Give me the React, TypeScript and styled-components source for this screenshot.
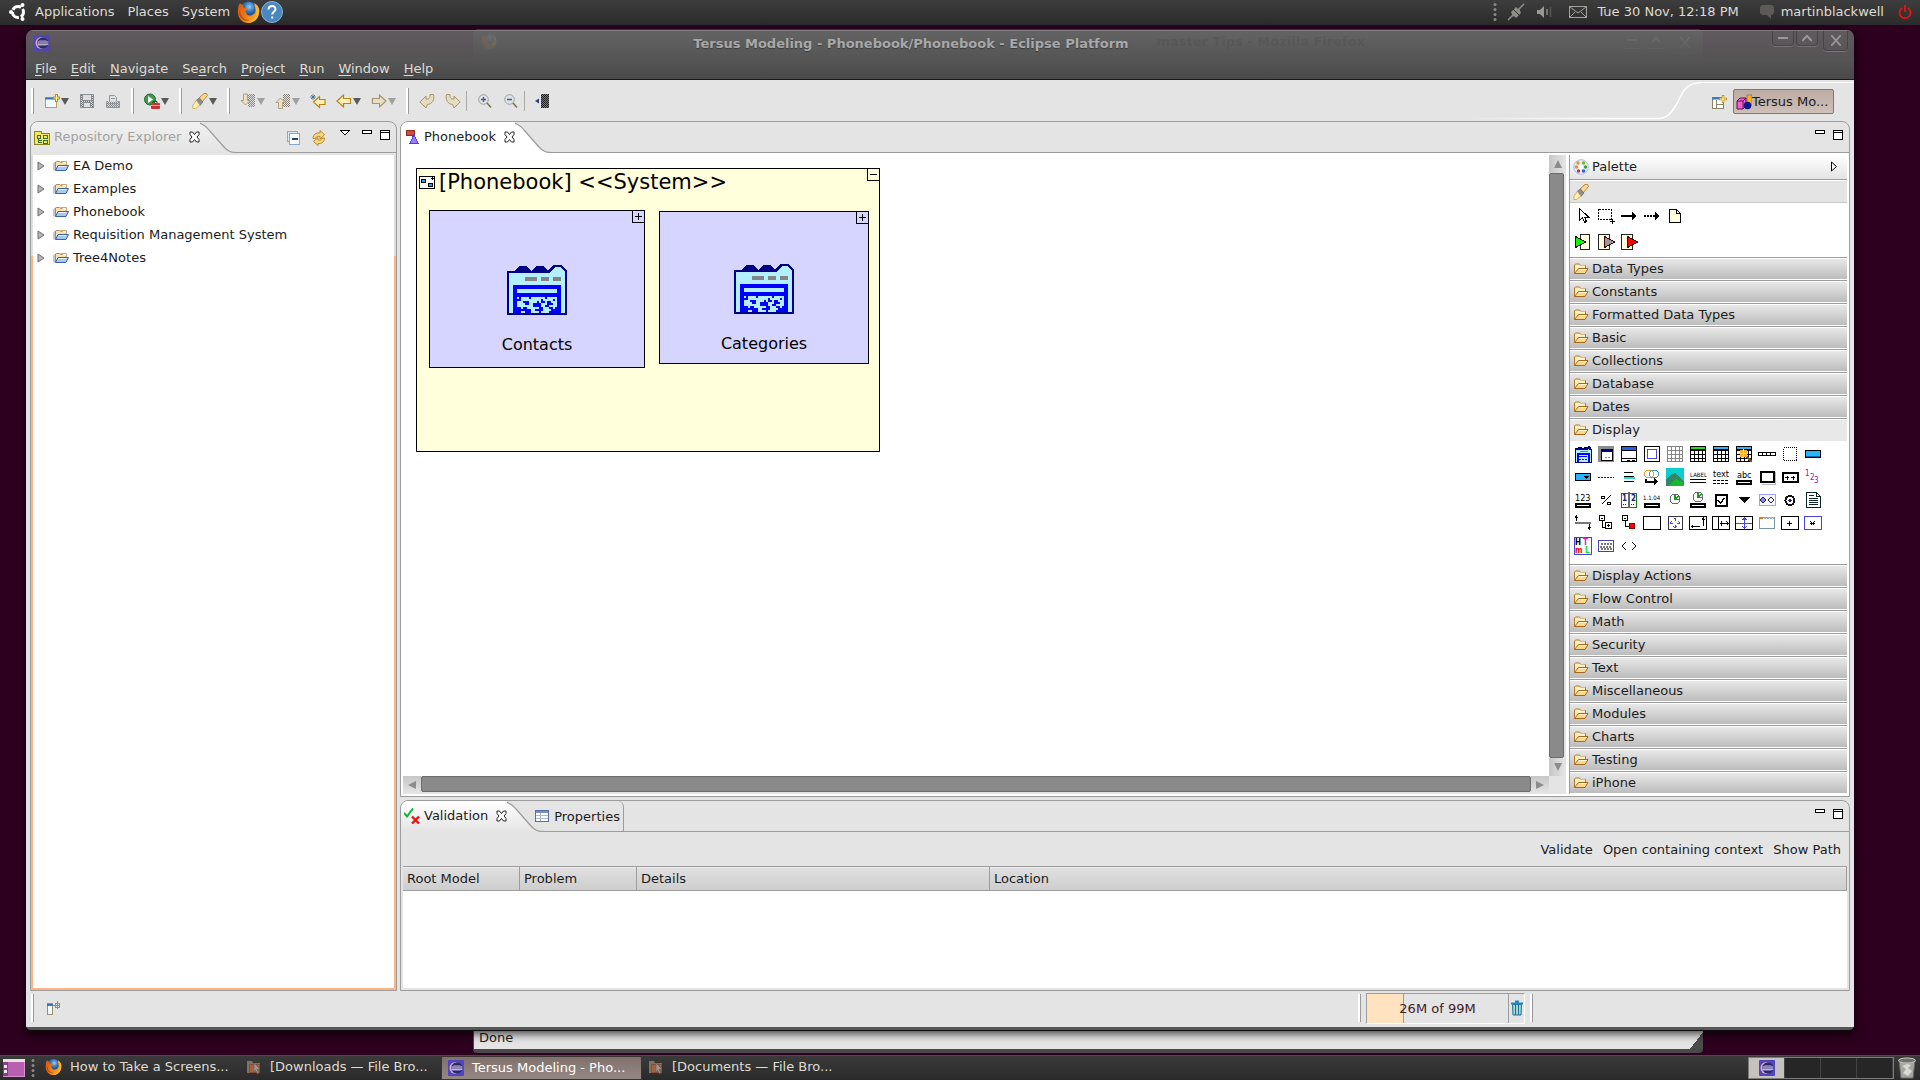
import React from "react";
import styled, { createGlobalStyle, css } from "styled-components";

const GlobalStyle = createGlobalStyle`
  *, *::before, *::after { box-sizing: border-box; }
  html, body { margin: 0; height: 100%; }
  body {
    overflow: hidden;
    background: #2c001e;
    font-family: "DejaVu Sans", Verdana, sans-serif;
    font-size: 13px;
    line-height: 17px;
    color: #1c1c1c;
  }
  button { font: inherit; color: inherit; background: none; border: 0; padding: 0; margin: 0; }
  svg { display: block; flex: none; }
`;

const LINE = "#9c9c9c";
const FACE = "#e4e4e4";

/* ---------- shared icon frame ---------- */

type PixProps = { w?: number; h?: number; smooth?: boolean; children: React.ReactNode };
const Pix = ({ w = 16, h = 16, smooth, children }: PixProps) => (
  <svg width={w} height={h} viewBox={`0 0 ${w} ${h}`} shapeRendering={smooth ? "auto" : "crispEdges"} fill="none" aria-hidden="true">
    {children}
  </svg>
);

const Firefox = ({ s = 16 }: { s?: number }) => (
  <svg width={s} height={s} viewBox="0 0 24 24" aria-hidden="true">
    <defs>
      <radialGradient id="globe" cx=".55" cy=".3" r=".6"><stop offset="0" stopColor="#8fd0f4" /><stop offset=".5" stopColor="#2b6cb4" /><stop offset="1" stopColor="#0d2c66" /></radialGradient>
      <linearGradient id="fox" x1="0" y1="0" x2="1" y2="1"><stop offset="0" stopColor="#d4540c" /><stop offset=".5" stopColor="#ee7a16" /><stop offset="1" stopColor="#f9c53a" /></linearGradient>
    </defs>
    <circle cx="12" cy="11" r="9.5" fill="url(#globe)" />
    <path d="M3 3c1 1 2 2 4 2-1 1-1 2 0 3l4 1c0 1-1 2-2 2 0 4 3 6 6 5 3-1 5-4 4-7 0-2-1-3-2-4 3 0 6 4 6 8 0 6-5 11-11 11S1 19 1 13c0-4 0-7 2-10z" fill="url(#fox)" />
    <path d="M18 3c4 2 6 6 5 10-1 6-5 10-11 11 5-2 8-6 8-11 0-4-1-7-2-10z" fill="#f7b52c" />
    <path d="M3 10c0 6 4 11 10 11-4 2-10-1-11-7z" fill="#b53a0a" opacity=".7" />
  </svg>
);

const EclipseIcon = ({ s = 16 }: { s?: number }) => (
  <svg width={s} height={s} viewBox="0 0 16 16" aria-hidden="true">
    <rect width="16" height="16" rx="1" fill="#5044c0" />
    <circle cx="7.500" cy="8" r="6" fill="#e2b4bc" />
    <circle cx="8.800" cy="8" r="5.700" fill="#2f2768" />
    <path d="M5.200 5.500h7.200M4 10.500h8.500" stroke="#6f66b8" strokeWidth="1.200" />
    <path d="M3.500 7h10.800M3.500 9.200h10.800" stroke="#e4e6fa" strokeWidth="1.200" />
  </svg>
);

const FilesIcon = () => (
  <Pix smooth>
    <path d="M1 2h5l1 2h7v10H1z" fill="#7c736c" /><path d="M3 5h11v9H3z" fill="#8b4a32" /><path d="M4 6h9v7H4z" fill="#a5623f" />
    <path d="M8 4l6 6-3 .5 2 3.500-1.500.8-2-3.500-1.500 2z" fill="#9c9894" stroke="#5f5a56" strokeWidth=".6" />
  </Pix>
);

const Handle = styled.span<{ $h?: number }>`
  width: 3px;
  height: ${(p) => p.$h ?? 26}px;
  margin: 0 5px;
  background: linear-gradient(90deg, #fff 0 2px, #999 2px);
  flex: none;
`;

const Dots = () => (
  <Pix w={4} h={18} smooth>
    {[2, 7, 12, 17].map((y) => <circle key={y} cx="2" cy={y - 0.5} r="1.500" fill="#8b8984" />)}
  </Pix>
);

/* ---------- desktop panels ---------- */

const Desktop = styled.div`
  position: relative;
  height: 100vh;
  overflow: hidden;
  display: flex;
  flex-direction: column;
  justify-content: space-between;
  background: #2c001e;
`;
const panel = css`
  display: flex;
  align-items: center;
  height: 25px;
  color: #dfdbd2;
  flex: none;
`;
const TopPanel = styled.header`
  ${panel}
  padding: 0 8px 2px 9px;
  background: linear-gradient(#3d3d3d, #2b2b2b);
`;
const PanelMenu = styled.button`
  padding: 0 7px 0 6px;
  height: 23px;
`;
const PanelIcons = styled.div`
  display: flex;
  align-items: center;
`;
const Tray = styled.div`
  margin-left: auto;
  display: flex;
  align-items: center;
  gap: 10px;
`;
const User = styled.button`
  display: flex;
  align-items: center;
  gap: 6px;
  margin: 0 4px 0 10px;
`;
const LogoSlot = styled.div`margin-right: 3px;`;

const BottomPanel = styled.footer`
  ${panel}
  border-top: 1px solid #4e474c;
  background: linear-gradient(#3a3a3a, #2a2a2a);
  padding: 0 3px 1px;
`;
const Task = styled.button<{ $active?: boolean }>`
  display: flex;
  align-items: center;
  gap: 8px;
  width: 201px;
  height: 24px;
  padding: 0 6px 2px;
  text-align: left;
  white-space: nowrap;
  ${(p) => p.$active && css`
    color: #fff;
    background: linear-gradient(#80716c, #948783);
    border: 1px solid #3a3431;
    padding: 0 6px;
  `}
`;
const TaskList = styled.nav`
  display: flex;
  margin-left: 4px;
`;
const DotSlot = styled.div`margin-left: 6px;`;
const Workspaces = styled.div`
  margin-left: auto;
  display: grid;
  grid-template-columns: repeat(4, 36px);
  height: 22px;
  border: 1px solid #7b7b7b;
`;
const Workspace = styled.button<{ $on?: boolean }>`
  display: grid;
  place-items: center;
  background: ${(p) => (p.$on ? "#c4c1bf" : "#262626")};
  border-right: 1px solid #444;
`;
const TrashSlot = styled.div`margin-left: 3px;`;

/* ---------- browser window behind ---------- */

const Browser = styled.section`
  position: absolute;
  top: 29px;
  right: 217px;
  bottom: 27px;
  left: 473px;
  display: flex;
  flex-direction: column;
  background: #4c474b;
  border-radius: 6px 6px 4px 4px;
`;
const BrowserTitle = styled.div`
  display: flex;
  align-items: flex-start;
  height: 30px;
  padding: 4px 6px 0 8px;
  background: #404040;
  border-radius: 6px 6px 0 0;
`;
const BrowserName = styled.div`
  flex: 1;
  padding-right: 256px;
  text-align: right;
  font-weight: bold;
  color: #000;
`;
const BrowserPage = styled.div`
  flex: 1;
  margin-left: 1px;
  background: #fff;
`;
const BrowserStatus = styled.div`
  display: flex;
  align-items: center;
  justify-content: space-between;
  height: 24px;
  margin-bottom: 4px;
  padding-left: 5px;
  background: ${FACE};
  margin-left: 1px;
`;
const Grip = styled.span`
  align-self: flex-end;
  width: 13px;
  height: 17px;
  background: linear-gradient(127deg, ${FACE} 50%, #4c4a4b 50%);
`;

/* ---------- main window ---------- */

const Window = styled.main`
  position: absolute;
  top: 30px;
  right: 66px;
  bottom: 49px;
  left: 26px;
  display: flex;
  flex-direction: column;
  border-radius: 7px 7px 5px 5px;
  overflow: hidden;
  box-shadow: 0 3px 9px rgba(0, 0, 0, 0.7);
  border-bottom: 1px solid #0c0c0c;
`;
const TitleBar = styled.div`
  display: flex;
  align-items: center;
  height: 28px;
  flex: none;
  padding: 0 6px 3px 8px;
  border-top: 1px solid #7d7d7d;
  background: linear-gradient(rgba(105, 105, 105, 0.86), rgba(86, 86, 86, 0.97));
`;
const Title = styled.h1`
  flex: 1;
  margin: 0;
  text-align: center;
  font-size: 13px;
  line-height: 17px;
  color: #a8a8a8;
  text-shadow: 0 1px 1px #3c3c3c;
`;
const Fade = styled.div`opacity: 0.9;`;
const WinButtons = styled.div`
  display: flex;
  align-self: flex-start;
  gap: 2px;
`;
const WinButton = styled.button<{ $close?: boolean }>`
  display: grid;
  place-items: center;
  width: ${(p) => (p.$close ? 25 : 22)}px;
  height: ${(p) => (p.$close ? 20 : 15)}px;
  margin-left: ${(p) => (p.$close ? 3 : 0)}px;
  border: 1px solid #47434a;
  border-top: 0;
  border-radius: 0 0 4px 4px;
  box-shadow: 0 1px 0 #777;
`;

const MenuBar = styled.nav`
  display: flex;
  height: 22px;
  flex: none;
  padding: 0 2px;
  background: linear-gradient(#565656, #494949);
  border-bottom: 1px solid #191919;
  color: #dfdbd2;
`;
const MenuItem = styled.button`
  padding: 0 7px 1px;
  & u { text-underline-offset: 2px; }
`;

const Toolbar = styled.div`
  display: flex;
  height: 41px;
  flex: none;
  background: ${FACE};
`;
const Tools = styled.div`
  display: flex;
  align-items: center;
`;
const Tool = styled.button`
  display: flex;
  align-items: center;
  gap: 1px;
  padding: 0 5px;
  height: 26px;
`;
const Sep = styled.span`
  width: 1px;
  height: 20px;
  margin-right: 5px;
  background: #aaa;
`;
const Perspectives = styled.div`
  display: flex;
  align-items: center;
  margin-left: auto;
`;
const PerspectiveTail = styled.div`
  display: flex;
  align-items: center;
  align-self: stretch;
  gap: 1px;
  padding: 2px 20px 0 4px;
  position: relative;
  &::before {
    content: "";
    position: absolute;
    left: 0;
    right: 0;
    top: 2px;
    border-top: 1px solid #fff;
  }
`;
const Selected = styled.button`
  display: flex;
  align-items: center;
  width: 101px;
  height: 25px;
  padding: 0 2px;
  white-space: nowrap;
  border: 1px solid #83766f;
  border-radius: 2px;
  background: linear-gradient(#bdaca3, #cdc0b8);
`;

const Workbench = styled.div`
  flex: 1;
  min-height: 0;
  display: grid;
  grid-template-columns: 367px minmax(0, 1fr);
  gap: 3px;
  padding: 0 4px;
  background: ${FACE};
`;
const Stack = styled.div`
  min-height: 0;
  display: grid;
  grid-template-rows: minmax(0, 1fr) 191px;
  gap: 3px;
`;
const Pane = styled.section`
  display: flex;
  flex-direction: column;
  min-width: 0;
  min-height: 0;
  border: 1px solid ${LINE};
  border-radius: 8px 8px 0 0;
  overflow: hidden;
  background: ${FACE};
`;
const TabStrip = styled.div`
  display: flex;
  height: 31px;
  flex: none;
  border-bottom: 1px solid ${LINE};
`;
const Tab = styled.div<{ $tone: "white" | "fade" | "dim" }>`
  position: relative;
  z-index: 1;
  display: flex;
  align-items: center;
  height: 31px;
  padding: 0 0 2px 3px;
  color: ${(p) => (p.$tone === "dim" ? "#a3a29f" : "#1c1c1c")};
  background: ${(p) => (p.$tone === "white" ? "#fff" : `linear-gradient(${p.$tone === "dim" ? "#f0f0f0" : "#fff"}, ${FACE})`)};
`;
const TabName = styled.span`
  margin: 0 8px 0 4px;
  white-space: nowrap;
`;
const IdleTab = styled.button`
  display: flex;
  align-items: center;
  gap: 5px;
  height: 30px;
  margin-left: -10px;
  padding-right: 3px;
  border-right: 1px solid ${LINE};
  border-top-right-radius: 6px;
`;
const ViewTools = styled.div`
  display: flex;
  align-items: flex-start;
  margin: 8px 6px 0 auto;
  gap: 8px;
`;
const CurveBox = styled.div`margin-left: -7px;`;

const Curve = ({ top, bottom }: { top: string; bottom: string }) => (
  <svg width={45} height={31} viewBox="0 0 45 31" aria-hidden="true">
    <defs><linearGradient id={`c${top.slice(1)}`} x1="0" y1="0" x2="0" y2="1"><stop offset="0" stopColor={top} /><stop offset="1" stopColor={bottom} /></linearGradient></defs>
    <rect width="45" height="31" fill={FACE} />
    <path d="M0 0C8 .5 12 3 16 8L31 26C35 29.500 38 30.500 45 30.500L45 31H0z" fill={`url(#c${top.slice(1)})`} />
    <path d="M0 -.5C8 .5 12 3 16 8L31 25C35 29.500 38 30.500 45 30.500" fill="none" stroke={LINE} strokeWidth="1.200" />
  </svg>
);

const CloseX = () => (
  <Pix w={11} h={12} smooth>
    <path d="M1 1h2.500l2 2.500L7.500 1H10v2.500L8 6l2 2.500V11H7.500l-2-2.500-2 2.500H1V8.500L3 6 1 3.500z" fill="#fff" stroke="#222" strokeWidth="1" />
  </Pix>
);
const MinMax = () => (
  <>
    <button aria-label="Minimize"><Pix w={10} h={5}><rect x=".5" y=".5" width="9" height="3" fill="#fff" stroke="#000" /></Pix></button>
    <button aria-label="Maximize"><Pix w={10} h={11}><rect x=".5" y=".5" width="9" height="9" fill="#fff" stroke="#000" /><path d="M0 2.500h10" stroke="#000" /></Pix></button>
  </>
);

/* ---------- tree ---------- */

const TreeFrame = styled.div`
  flex: 1;
  display: flex;
  margin-top: 2px;
  padding: 0 2px 2px;
  background: linear-gradient(#dedede 101px, #fdb484 101px);
`;
const Tree = styled.ul`
  flex: 1;
  margin: 0;
  padding: 0;
  list-style: none;
  background: #fff;
`;
const TreeRow = styled.li`
  display: flex;
  align-items: center;
  height: 23px;
  padding: 0 0 2px 4px;
`;
const TreeLabel = styled.span`margin-left: 4px;`;
const Twist = styled.button`margin-right: 8px;`;

const BlueFolder = () => (
  <Pix smooth>
    <path d="M2.500 12V4.500l1-1h3l1 1h5.500v3" fill="#f8e3b0" stroke="#b08848" />
    <path d="M7.500 3.500h6v3" fill="#fff" stroke="#b89050" strokeWidth=".8" />
    <path d="M2.500 12.500l2.500-5h10.500l-2.500 5z" fill="#a7c8f0" stroke="#3c62a8" />
    <path d="M5.500 8.500h8" stroke="#e6f1fd" />
    <path d="M1 12.500V5.500l2-2" stroke="#6a6f8c" strokeWidth=".8" />
  </Pix>
);
const GoldFolder = () => (
  <Pix smooth>
    <path d="M1.500 12.500V4l1-1h4l1 1.500h5v3" fill="#fdf0c0" stroke="#b8762a" />
    <path d="M1.500 12.500l4-5h9.500l-3 5z" fill="#fbd98c" stroke="#a5661e" />
    <path d="M5 5h7M6 8.500h7.500" stroke="#fff7dc" />
  </Pix>
);

/* ---------- editor ---------- */

const EditorBody = styled.div`
  flex: 1;
  min-height: 0;
  display: grid;
  grid-template-columns: minmax(0, 1fr) 281px;
  background: #fff;
  padding: 2px;
`;
const Scroller = styled.div`
  display: grid;
  grid-template-columns: minmax(0, 1fr) 17px;
  grid-template-rows: minmax(0, 1fr) 18px;
  min-height: 0;
`;
const Canvas = styled.div`
  position: relative;
  overflow: hidden;
`;
const VBar = styled.div`
  display: flex;
  flex-direction: column;
  background: ${FACE};
`;
const HBar = styled.div`
  display: flex;
  background: ${FACE};
`;
const Corner = styled.div`background: ${FACE};`;
const ScrollButton = styled.button<{ $v?: boolean }>`
  display: grid;
  place-items: center;
  width: ${(p) => (p.$v ? 17 : 18)}px;
  height: 18px;
  background: linear-gradient(${(p) => (p.$v ? "90deg" : "180deg")}, #c6c6c6, #e6e6e6);
`;
const Thumb = styled.div<{ $v?: boolean }>`
  flex: 1;
  background: #8a8a8a;
  border: 1px solid #6b6b6b;
  border-radius: 2px;
  margin: ${(p) => (p.$v ? "0 2px 0 0" : "0 0 2px 0")};
`;

const Node = styled.div<{ $x: number; $y: number; $w: number; $h: number; $fill: string }>`
  position: absolute;
  left: ${(p) => p.$x}px;
  top: ${(p) => p.$y}px;
  width: ${(p) => p.$w}px;
  height: ${(p) => p.$h}px;
  background: ${(p) => p.$fill};
  border: 1px solid #000;
  color: #000;
`;
const DisplayNode = styled(Node)<{ $pad: number }>`
  display: flex;
  flex-direction: column;
  align-items: center;
  justify-content: flex-end;
  gap: 19px;
  padding-bottom: ${(p) => p.$pad}px;
  font-size: 16px;
  line-height: 22px;
`;
const Expander = styled.button`
  position: absolute;
  top: -1px;
  right: -1px;
  width: 13px;
  height: 13px;
  border: 1px solid #000;
`;
const NodeTitle = styled.div`
  display: flex;
  align-items: center;
  gap: 4px;
  height: 26px;
  padding-left: 2px;
  font-size: 21px;
  line-height: 26px;
  white-space: nowrap;
`;

const CardFile = () => (
  <Pix w={60} h={50}>
    <path d="M2 8h40l6-6h6l4 5v41H2z" fill="#b2f0ff" />
    <path d="M0 6h8v2H2v40h56V7l-4-5h-6l-6 6H8V6l4-5h8l4 5 5-5h7l5 5 5-6h9l5 6v44H0z" fill="#000084" fillRule="evenodd" />
    <path d="M8 6l4-5h8l4 6 5-6h7l5 5v2H8z" fill="#000084" />
    <path d="M18 12h12v4H18zM34 12h8v4h-8zM46 12h8v4h-8z" fill="#848484" />
    <path d="M6 20h48v28H6z" fill="#0000ff" />
    <path d="M10 24h40v4H10zM10 32h40v10h-2v4h2v2h-4v-2h-4v2H10v-2h4v-2h-4z" fill="#b2f0ff" />
    <path d="M12 32h2v4h-4v-2h2zM16 36h6v4h-4v-2h-2zM22 32h2v2h-2zM26 36h6v2h2v4h-8v-4h4v-2h-4zM34 34h2v2h2v2h-4zM38 32h2v2h-2zM40 36h4v2h2v2h-4v2h-4v-2h2zM46 34h2v2h-2zM10 42h4v2h2v-2h4v2h4v4h-6v-2h-4v2h-4v-2h4v-2h-4zM28 44h4v-2h4v4h-2v2h-2v-2h-4zM42 42h4v2h4v4h-6v-4h-2z" fill="#0000ff" />
  </Pix>
);
const Sign = ({ plus }: { plus?: boolean }) => (
  <Pix w={11} h={11}><path d={plus ? "M2 5.500h7M5.500 2v7" : "M2 5.500h7"} stroke="#000" /></Pix>
);

/* ---------- palette ---------- */

const Palette = styled.aside`
  display: flex;
  flex-direction: column;
  min-height: 0;
  overflow: hidden;
  margin-left: 3px;
  border-left: 1px solid ${LINE};
`;
const PaletteHead = styled.div`
  display: flex;
  align-items: center;
  gap: 3px;
  height: 25px;
  padding: 0 10px 1px 3px;
  flex: none;
  background: linear-gradient(#fff, ${FACE});
  border-bottom: 1px solid ${LINE};
`;
const Push = styled.button`margin-left: auto;`;
const PaletteTools = styled.div`
  display: flex;
  align-items: center;
  height: 22px;
  margin-top: 1px;
  padding-left: 3px;
  flex: none;
  background: ${FACE};
  border-bottom: 1px solid #c8c8c8;
`;
const Entries = styled.div<{ $row: number; $cols: number }>`
  display: grid;
  grid-template-columns: repeat(${(p) => p.$cols}, 23px);
  grid-auto-rows: ${(p) => p.$row}px;
  align-content: start;
  padding: 0 1px 2px;
  flex: none;
`;
const DisplayEntries = styled(Entries)`height: 123px; padding-top: 1px;`;
const Entry = styled.button`
  display: grid;
  place-items: center;
`;
const Drawer = styled.button<{ $open?: boolean }>`
  display: flex;
  align-items: center;
  gap: 3px;
  height: 23px;
  flex: none;
  padding: 0 3px;
  text-align: left;
  border-top: 1px solid ${LINE};
  border-bottom: 1px solid ${(p) => (p.$open ? "#e8e8e8" : "#fff")};
  box-shadow: inset 0 1px 0 #fff;
  background: ${(p) => (p.$open ? "#e8e8e8" : "linear-gradient(#eaeaea, #bcbcbc)")};
`;

const Lettering = styled.text<{ $size: number; $bold?: boolean }>`
  font-family: "DejaVu Sans Condensed", "DejaVu Sans", sans-serif;
  font-size: ${(p) => p.$size}px;
  font-weight: ${(p) => (p.$bold ? "bold" : "normal")};
`;

const GridArt = ({ head, line = "#000" }: { head?: string; line?: string }) => (
  <>
    <path d="M1.500 1.500h15v15h-15zM1.500 5.500h15M1.500 9.500h15M1.500 13.500h15M5.500 1.500v15M9.500 1.500v15M13.500 1.500v15" stroke={line} />
    {head && <rect x="1.500" y="1.500" width="15" height="3" fill={head} stroke="#000" />}
  </>
);
const Underbox = () => <rect x="2" y="13" width="14" height="3" fill="#fff" stroke="#000" strokeWidth="2" />;
const Clock = ({ x, y }: { x: number; y: number }) => (
  <><circle cx={x} cy={y} r="5" fill="#fff" stroke="#667" /><path d={`M${x} ${y - 4}v4.500h4M${x} ${y}l4-3`} stroke="#10a010" strokeWidth="1.500" /></>
);

const displayIcons: [string, React.ReactNode][] = [
  ["View", <><path d="M1 17V4h2l2-2h2l2 2 2-2h2l2 2h2v13z" fill="#b2f0ff" stroke="#000084" /><path d="M1 4h12l2-2 2 2" stroke="#000084" strokeWidth="2" /><path d="M3.500 17V8.500h11V17" stroke="#00f" strokeWidth="2" /><path d="M5 11.500h8M5 14.500h2M8 14.500h2M11 14.500h2" stroke="#00f" /><path d="M6 6.500h8" stroke="#848484" /></>],
  ["Dialog", <><rect x="1" y="1" width="16" height="16" fill="#8c8c8c" /><rect x="4" y="4" width="11" height="11" fill="#fff" stroke="#000" strokeWidth="1" /><path d="M4 5h11" stroke="#000084" strokeWidth="3" /><path d="M8 12.500h2M11 12.500h2" stroke="#888" /></>],
  ["Window", <><rect x="1.500" y="1.500" width="15" height="15" fill="#fff" stroke="#000" /><rect x="2" y="2" width="14" height="3" fill="#1f62e8" /><path d="M1 5.500h16M1 13.500h16M7 15.500h3M12 15.500h3" stroke="#000" /></>],
  ["Pane", <><rect x="1.500" y="1.500" width="15" height="15" fill="#fff" stroke="#000" /><rect x="4.500" y="4.500" width="9" height="9" stroke="#4a4ae0" /></>],
  ["Grid", <GridArt line="#848484" />],
  ["Table", <GridArt head="#1ce41c" />],
  ["Simple Table", <GridArt head="#38b0f8" />],
  ["Table Wizard", <><GridArt head="#38b0f8" /><path d="M10 10l7 7" stroke="#805010" strokeWidth="2.500" /><path d="M5 5h7v7H5z" fill="#fcb424" /><path d="M8 4v9M4 8h9" stroke="#fce080" /></>],
  ["Row", <><rect x=".5" y="7.500" width="17" height="3" stroke="#000" /><path d="M4.500 8v3M8.500 8v3M12.500 8v3" stroke="#000" /></>],
  ["Group", <rect x="2.500" y="2.500" width="13" height="13" stroke="#000" strokeDasharray="1 1" />],
  ["Button", <><rect x="1.500" y="5.500" width="15" height="7" fill="#28b4fc" stroke="#000" /><path d="M2 11.500h14" stroke="#0868a8" /></>],
  ["Chooser", <><rect x="1.500" y="5.500" width="15" height="7" fill="#28b4fc" stroke="#000" /><path d="M9 8h6l-3 3z" fill="#000" /></>],
  ["Separator", <path d="M1 9.500h16" stroke="#222" strokeDasharray="2 1" />],
  ["List", <><path d="M4 4.500h9M4 13.500h10" stroke="#000" /><path d="M4 8.500h10" stroke="#000" /><path d="M4 10h11" stroke="#30d8c8" strokeWidth="2" /></>],
  ["Link", <><ellipse cx="6" cy="6" rx="5" ry="3.500" stroke="#e0a030" /><ellipse cx="11" cy="6" rx="5" ry="3.500" stroke="#4098c8" /><path d="M3 11v3h10" stroke="#000" strokeWidth="2" /><path d="M11 10l4 4-4 3z" fill="#000" /></>],
  ["Image", <><rect width="18" height="18" fill="#08d0d0" /><path d="M0 12l5-6 5-1 8 9v4H0z" fill="#308868" /><path d="M2 18l8-7 7 3 1 4z" fill="#18b830" /></>],
  ["Label", <><Lettering x="1" y="9" $size={6} fill="#000">LABEL</Lettering><path d="M1 11.500h16M1 14.500h16" stroke="#000" /></>],
  ["Text", <><Lettering x="1" y="9" $size={9} fill="#000">text</Lettering><path d="M1 12.500h16M1 15.500h16" stroke="#000" strokeDasharray="3 1" /></>],
  ["Text Field", <><Lettering x="2" y="10" $size={9} fill="#000">abc</Lettering><Underbox /></>],
  ["Text Area", <><rect x="3" y="4" width="13" height="10" fill="#fff" stroke="#000" strokeWidth="2" /><path d="M17.500 4v12H4" stroke="#bbb" /></>],
  ["Password Field", <><rect x="2" y="5" width="15" height="9" fill="#fff" stroke="#000" strokeWidth="2" /><path d="M4 9.500h4M6 7.500v4M10 9.500h4M12 7.500v4" stroke="#000" /></>],
  ["Number", <><Lettering x="1" y="8" $size={8} fill="#a010a0">1</Lettering><Lettering x="6" y="12" $size={8} fill="#a010a0">2</Lettering><Lettering x="10" y="15" $size={8} fill="#a010a0">3</Lettering></>],
  ["Number Field", <><Lettering x="1" y="10" $size={9} fill="#000">123</Lettering><Underbox /></>],
  ["Percentage", <><path d="M4.500 13.500l9-9" stroke="#000" /><rect x="4.500" y="5.500" width="3" height="2" stroke="#000" /><rect x="10.500" y="11.500" width="3" height="2" stroke="#000" /></>],
  ["Calendar", <><path d="M1.500 16V2.500h15V16z" fill="#fff" stroke="#187818" /><path d="M8 1h2v16H8z" fill="#666" /><Lettering x="2" y="10" $size={8} $bold fill="#0c1c90">1</Lettering><Lettering x="11" y="10" $size={8} $bold fill="#0c1c90">2</Lettering><path d="M3 13.500h4M11 13.500h4" stroke="#222" strokeDasharray="1 1" /></>],
  ["Date Field", <><Lettering x="0" y="9" $size={6} fill="#000">1.1.04</Lettering><Underbox /></>],
  ["Time", <Clock x={9} y={8} />],
  ["Time Field", <><Clock x={9} y={6} /><Underbox /></>],
  ["Check Box", <><rect x="4" y="4" width="11" height="11" fill="#fff" stroke="#000" strokeWidth="1.500" /><path d="M6 9l2.500 3 4-5" stroke="#000" strokeWidth="1.500" /></>],
  ["Drop Down", <path d="M3 6h12l-6 6z" fill="#000" />],
  ["Radio Group", <><rect x="1" y="3.500" width="16" height="11" fill="#f4f4ff" stroke="#a0a0f0" /><circle cx="5" cy="9" r="2.200" stroke="#222" fill="#88f" /><circle cx="13" cy="9" r="2.200" stroke="#222" /></>],
  ["Radio Button", <><circle cx="9" cy="9.500" r="4.500" stroke="#111" strokeWidth="2" /><circle cx="9" cy="9.500" r="1.700" fill="#226" /></>],
  ["Document", <><path d="M2.500 1.500h10l4 4v11h-14z" fill="#fff" stroke="#0c2424" /><path d="M12.500 1.500v4h4M5 4.500h5M5 7.500h9M5 9.500h9M5 11.500h9M5 13.500h9" stroke="#0c2424" /></>],
  ["Scroller", <><path d="M1 8.500h16" stroke="#777" strokeWidth="2" /><path d="M2.500 7V2M1 4l1.500-2L4 4M15.500 10v5M14 13l1.500 2 1.500-2" stroke="#000" /></>],
  ["Tree", <><path d="M2.500 1.500h5v5h-5zM4 4h2M5 7v6.500h3M8.500 8.500h6v6h-6z" stroke="#000" /><path d="M10 11.500h3M11.500 10v3" stroke="#000" /></>],
  ["Tree Leaf", <><path d="M2.500 1.500h5v5h-5zM4 4h2M5 7v5.500h4" stroke="#000" /><rect x="9.500" y="9.500" width="5" height="5" fill="#f00" stroke="#800" /></>],
  ["Box", <rect x=".5" y="2.500" width="17" height="13" fill="#fff" stroke="#000" />],
  ["Resizer", <><rect x="2" y="2.500" width="14" height="13" fill="#fff" stroke="#334" /><path d="M9 4v3M9 11v3M4 9h3M11 9h3M7.500 5.500L9 4l1.500 1.500M7.500 12.500L9 14l1.500-1.500M5.500 7.500L4 9l1.500 1.500M12.500 7.500L14 9l-1.500 1.500" stroke="#44e" /></>],
  ["Corner Pane", <><rect x=".5" y="2.500" width="17" height="13" fill="#fff" stroke="#000" /><path d="M14.500 5v7M3 12.500h8M13 6l1.500-2L16 6M4 11l-1.500 1.500L4 14" stroke="#000" /></>],
  ["Column Splitter", <><rect x=".5" y="2.500" width="17" height="13" fill="#fff" stroke="#000" /><path d="M6.500 3v12M8 9.500h9M10 7.500L8.500 9.500l1.500 2M14.500 7.500l1.500 2-1.500 2" stroke="#000" /></>],
  ["Row Splitter", <><rect x=".5" y="2.500" width="17" height="13" fill="#fff" stroke="#000" /><path d="M1 9.500h16M9.500 3v12M7.500 6l2-2 2 2M7.500 12.500l2 2 2-2" stroke="#44e" /></>],
  ["Tab Pane", <><rect x="1.500" y="3.500" width="15" height="11" fill="#fff" stroke="#7898a8" /><path d="M2 4h3" stroke="#f07020" strokeWidth="2" /><path d="M6 4h10" stroke="#98b8c8" strokeWidth="2" strokeDasharray="2 1" /></>],
  ["Plus Pane", <><rect x=".5" y="2.500" width="17" height="13" fill="#fff" stroke="#000" /><path d="M6 9.500h5M8.500 7v5" stroke="#000" /></>],
  ["Star Pane", <><rect x=".5" y="2.500" width="17" height="13" fill="#fff" stroke="#44e" /><path d="M6 9.500h5M6.500 7.500l4 4M10.500 7.500l-4 4" stroke="#000" /></>],
  ["HTML", <><rect x=".5" y=".5" width="17" height="17" fill="#fff" stroke="#44c" /><Lettering x="1" y="8" $size={8} $bold fill="#000">H</Lettering><Lettering x="9" y="8" $size={8} $bold fill="#d020d0">T</Lettering><Lettering x="1" y="16" $size={8} $bold fill="#e00">m</Lettering><Lettering x="11" y="16" $size={8} $bold fill="#10e010">L</Lettering></>],
  ["Keypad", <><rect x="1.500" y="3.500" width="15" height="11" fill="#fff" stroke="#44a" /><path d="M4 6.500h11M3 9.500h11M4 12h11" stroke="#777" strokeWidth="2" strokeDasharray="2 1" /></>],
  ["Tag", <path d="M6 5L2 9l4 4M12 5l4 4-4 4" stroke="#000" />],
];

const basicIcons: [string, React.ReactNode][] = [
  ["Select", <path d="M5.500 1.500v12l3-3 2 5 2-1-2-4.500h4z" fill="#fff" stroke="#000" />],
  ["Marquee", <><rect x="1.500" y="2.500" width="13" height="10" stroke="#000" strokeDasharray="2 1" /><path d="M13 14.500h5M15.500 12v5" stroke="#000" /></>],
  ["Flow", <><path d="M1 9h12" stroke="#000" strokeWidth="2" /><path d="M12 5l5 4-5 4z" fill="#000" /></>],
  ["Dashed Flow", <><path d="M1 9h11" stroke="#000" strokeWidth="2" strokeDasharray="2 1" /><path d="M12 5l5 4-5 4z" fill="#000" /></>],
  ["Note", <><path d="M3.500 2.500h7l4 4v9h-11z" fill="#ffffe0" stroke="#000" /><path d="M10.500 2.500v4h4" stroke="#000" /></>],
];
const port = (x: number, w: number, tx: number, fill: string) => (
  <><rect x={x} y="1.500" width={w} height="15" fill="#ffffe0" stroke="#222" /><path d={`M${tx} 3.500l10 5.500-10 5.500z`} fill={fill} stroke="#400808" /></>
);
const slotIcons: [string, React.ReactNode][] = [
  ["Trigger", port(6.5, 9, 1.5, "#0f0")],
  ["Exit", port(1.5, 11, 7.5, "#999")],
  ["Error", port(1.5, 11, 7.5, "#f00")],
];

const closedTop = ["Data Types", "Constants", "Formatted Data Types", "Basic", "Collections", "Database", "Dates"];
const closedBottom = ["Display Actions", "Flow Control", "Math", "Security", "Text", "Miscellaneous", "Modules", "Charts", "Testing", "iPhone"];

const renderEntries = (list: [string, React.ReactNode][]) =>
  list.map(([name, art]) => (
    <Entry key={name} aria-label={name}><Pix w={18} h={18}>{art}</Pix></Entry>
  ));

/* ---------- validation ---------- */

const ViewBar = styled.div`
  display: flex;
  align-items: center;
  justify-content: flex-end;
  gap: 10px;
  height: 34px;
  flex: none;
  padding: 0 8px;
`;
const TableArea = styled.div`
  flex: 1;
  margin: 0 2px 2px;
  background: #fff;
`;
const Problems = styled.table`
  width: 100%;
  table-layout: fixed;
  border-collapse: separate;
  border-spacing: 0;
  & th {
    height: 25px;
    padding: 0 4px;
    text-align: left;
    font-weight: normal;
    border: solid ${LINE};
    border-width: 1px 1px 1px 0;
    background: linear-gradient(#e0e0e0, #cecece);
    box-shadow: inset 0 1px 0 #eee;
  }
`;
const Col = styled.col<{ $w?: number }>`width: ${(p) => (p.$w ? `${p.$w}px` : "auto")};`;

/* ---------- status ---------- */

const Status = styled.div`
  display: flex;
  align-items: center;
  height: 36px;
  flex: none;
  padding-bottom: 2px;
  background: ${FACE};
`;
const Frame = styled.div`height: 3px; flex: none; background: #555756;`;
const Heap = styled.div`
  display: flex;
  width: 159px;
  height: 31px;
  border: 1px solid ${LINE};
  border-right-color: #fff;
  border-bottom-color: #fff;
`;
const HeapText = styled.div`
  flex: 1;
  padding-top: 6px;
  text-align: center;
  color: #42201c;
  border-right: 1px solid ${LINE};
  background: linear-gradient(90deg, #ffe3c0 36px, ${LINE} 36px 37px, ${FACE} 37px);
`;
const HeapTrash = styled.button`
  display: grid;
  place-items: center;
  width: 15px;
`;
const StatusRight = styled.div`
  display: flex;
  align-items: center;
  margin: 0 316px 0 auto;
`;

/* ---------- toolbar glyphs ---------- */

const Arrow = ({ dim }: { dim?: boolean }) => (
  <Pix w={8} h={8} smooth><path d="M0 1h8L4 8z" fill={dim ? "#a0a0a0" : "#5a5a5a"} /></Pix>
);
const Dither = ({ id, c }: { id: string; c: string }) => (
  <defs><pattern id={id} width="2" height="2" patternUnits="userSpaceOnUse"><rect width="1" height="1" fill={c} /><rect x="1" y="1" width="1" height="1" fill={c} /></pattern></defs>
);
const NewIcon = <><rect x="1.500" y="4.500" width="11" height="10" fill="#f4fbff" stroke="#bba050" /><path d="M1 5.500h10" stroke="#3c78b8" strokeWidth="2" /><path d="M12.500 1v8M9 5h7" stroke="#c09018" strokeWidth="3" /><path d="M12.500 2v6M10 5h5" stroke="#fff2a8" /></>;
const SaveIcon = <><Dither id="dSave" c="#70777c" /><path d="M1 1h14v14H1z" fill="#d4d6d8" /><path d="M1 1h14v14H1z" fill="url(#dSave)" /><path d="M4 1.500h8V7H4zM5 10h6v5H5z" fill="#dcdedf" /><path d="M1.500 1.500h13v13h-13zM3.500 1.500V7.500h9V1.500M4.500 14.500v-5h7v5" stroke="#8a8e92" /></>;
const PrintIcon = <><Dither id="dPrint" c="#85898e" /><path d="M1.500 8.500h13v6h-13z" fill="#cfd1d4" /><path d="M1.500 8.500h13v6h-13z" fill="url(#dPrint)" /><path d="M4.500 8.500v-6h5l2 2v4" fill="#e2e2e2" stroke="#94969a" /><path d="M3 8.500h-1.500v6h13v-6H13M3.500 10.500h9M6 5.500h4" stroke="#94969a" /></>;
const RunIcon = <><circle cx="6" cy="6.500" r="5.500" fill="#3c9c4c" stroke="#1c6c30" /><path d="M4 3l5 3.500-5 3.500z" fill="#fff" /><path d="M9 10v-1.500h4V10" stroke="#a01818" /><rect x="7" y="10" width="9" height="6" rx="1" fill="#c83434" /><path d="M7 12.500h9" stroke="#f4a0a0" /></>;
const TorchIcon = <><path d="M8 4l4-3.500h2.500l1 2L10 9 6.500 6z" fill="#fcd890" stroke="#a87428" strokeWidth=".8" /><path d="M4 7.500L7.500 5l3.500 4-3 3.500z" fill="#8c8c98" stroke="#606068" strokeWidth=".6" /><path d="M4.500 7.500L.8 12.500v3h3l4-3.500z" fill="#fff0b0" stroke="#d0a040" strokeWidth=".8" /></>;
const AnnIcon = (up: boolean) => <><Dither id={up ? "dU" : "dD"} c="#8a8478" /><rect x="8" y="1" width="7" height="13" fill={`url(#${up ? "dU" : "dD"})`} /><path d={up ? "M5.500 5l4.500 4.500H7.500v6h-4v-6H1z" : "M5.500 12L10 7.500H7.500V1h-4v6.500H1z"} fill="#ece0c4" stroke="#a09070" strokeWidth=".8" /></>;
const ArrowShape = (d: string, dim?: boolean) => <path d={d} fill={dim ? "#e8dfc8" : "#fdf0b4"} stroke={dim ? "#a6946c" : "#b88418"} strokeWidth="1.200" />;
const LEFT = "M1 8l6.500-6v3.500h7v5h-7V14z";
const RIGHT = "M15 8L8.500 2v3.500h-7v5h7V14z";
const EditIcon = <>{ArrowShape("M3.500 9L9.500 3.500v3h5.500v5H9.500v3z")}<path d="M3 1v6M0 4h6M1 2l4 4M5 2L1 6" stroke="#2c5c90" strokeWidth=".7" /></>;
const Undo = <path d="M.8 9L7 3v3c3 .5 4.500-1.500 4-4.500h3.500C16 7 13 11 8.500 11.500L7 15z" fill="#e6dcc0" stroke="#a89468" />;
const Redo = <path d="M15.200 9L9 3v3c-3 .5-4.500-1.500-4-4.500H1.500C0 7 3 11 7.500 11.500L9 15z" fill="#e6dcc0" stroke="#a89468" />;
const Zoom = (plus: boolean) => <><circle cx="6.500" cy="6.500" r="4.800" fill="#dfe3e8" stroke="#9a9ea6" /><path d={plus ? "M4 6.500h5M6.500 4v5" : "M4 6.500h5"} stroke="#4c5a7c" strokeWidth="1.400" /><path d="M10 10l4 4.500" stroke="#80724e" strokeWidth="1.600" /></>;
const OutIcon = <><Dither id="dOut" c="#222" /><rect x="6" y="1" width="8" height="14" fill="#777" /><rect x="6" y="1" width="8" height="14" fill="url(#dOut)" /><path d="M0 8l4-2.500v5z" fill="#303c80" /></>;

const ToolBtn = ({ name, drop, dim, children }: { name: string; drop?: boolean; dim?: boolean; children: React.ReactNode }) => (
  <Tool aria-label={name}><Pix smooth>{children}</Pix>{drop && <Arrow dim={dim} />}</Tool>
);

const menus: [string, string, string][] = [["", "F", "ile"], ["", "E", "dit"], ["", "N", "avigate"], ["Se", "a", "rch"], ["", "P", "roject"], ["", "R", "un"], ["", "W", "indow"], ["", "H", "elp"]];
const projects = ["EA Demo", "Examples", "Phonebook", "Requisition Management System", "Tree4Notes"];

const WindowButtons = () => (
  <WinButtons>
    <WinButton aria-label="Minimize window"><Pix w={10} h={8} smooth><path d="M0 4h10" stroke="#9a979a" strokeWidth="2" /></Pix></WinButton>
    <WinButton aria-label="Maximize window"><Pix w={10} h={8} smooth><path d="M0 7l5-5 5 5" stroke="#9a979a" strokeWidth="2" /></Pix></WinButton>
    <WinButton $close aria-label="Close window"><Pix w={10} h={11} smooth><path d="M0 0l10 11M10 0L0 11" stroke="#9a979a" strokeWidth="1.800" /></Pix></WinButton>
  </WinButtons>
);

export default function App() {
  return (
    <Desktop>
      <GlobalStyle />
      <TopPanel>
        <LogoSlot>
          <Pix w={17} h={20} smooth>
            <circle cx="9" cy="10" r="5.500" stroke="#fff" strokeWidth="3" strokeDasharray="9.500 2" strokeDashoffset="4" />
            <circle cx="2" cy="10" r="2" fill="#fff" /><circle cx="13.500" cy="3" r="2" fill="#fff" /><circle cx="13.500" cy="17" r="2" fill="#fff" />
          </Pix>
        </LogoSlot>
        <PanelMenu>Applications</PanelMenu>
        <PanelMenu>Places</PanelMenu>
        <PanelMenu>System</PanelMenu>
        <PanelIcons>
          <button aria-label="Firefox"><Firefox s={23} /></button>
          <button aria-label="Help">
            <Pix w={24} h={24} smooth><circle cx="12" cy="12" r="10.500" fill="#4a86bf" stroke="#86b4dc" /><path d="M8.500 9.500C8.500 5 15.500 5 15.500 9c0 2.500-3.300 2.800-3.300 5.500M12.200 16.500v2" stroke="#fff" strokeWidth="2" /></Pix>
          </button>
        </PanelIcons>
        <Tray>
          <Dots />
          <Pix w={18} h={18} smooth><path d="M1 17l5-5M12 6l5-5" stroke="#8f8d88" strokeWidth="1.500" /><path d="M4 9l5-5 2 2 1-1 2 5-5 5-2-2-1 1z" fill="#8f8d88" /><path d="M6 6l6 6" stroke="#333" /></Pix>
          <Pix w={24} h={16} smooth><path d="M2 6h3l4-4v12l-4-4H2z" fill="#9a9893" /><path d="M12 5v6" stroke="#8a8883" strokeWidth="1.500" /><path d="M15.500 3v10" stroke="#555" strokeWidth="1.500" /></Pix>
          <Pix w={18} h={12} smooth><rect x=".5" y=".5" width="17" height="11" stroke="#a4a29c" /><path d="M1 1l8 6 8-6M1 11l5-5M17 11l-5-5" stroke="#a4a29c" /></Pix>
          <button>Tue 30 Nov, 12:18 PM</button>
          <User>
            <Pix w={16} h={15} smooth><path d="M3 1h10l2 2v6l-2 2h-1v4l-4-4H3L1 9V3z" fill="#5c5b58" /></Pix>
            martinblackwell
          </User>
          <button aria-label="Power"><Pix w={14} h={14} smooth><path d="M4 3a5.500 5.500 0 1 0 6 0M7 0v7" stroke="#ee1111" strokeWidth="1.800" /></Pix></button>
        </Tray>
      </TopPanel>

      <Browser>
        <BrowserTitle>
          <Firefox />
          <BrowserName>master Tips - Mozilla Firefox</BrowserName>
          <WindowButtons />
        </BrowserTitle>
        <BrowserPage />
        <BrowserStatus>Done<Grip /></BrowserStatus>
      </Browser>

      <Window>
        <TitleBar>
          <Fade><EclipseIcon /></Fade>
          <Title>Tersus Modeling - Phonebook/Phonebook - Eclipse Platform</Title>
          <WindowButtons />
        </TitleBar>
        <MenuBar>
          {menus.map(([a, b, c]) => <MenuItem key={b + c}>{a}<u>{b}</u>{c}</MenuItem>)}
        </MenuBar>
        <Toolbar>
          <Tools>
            <Handle />
            <ToolBtn name="New" drop>{NewIcon}</ToolBtn>
            <ToolBtn name="Save">{SaveIcon}</ToolBtn>
            <ToolBtn name="Print">{PrintIcon}</ToolBtn>
            <Handle />
            <ToolBtn name="External Tools" drop>{RunIcon}</ToolBtn>
            <Handle />
            <ToolBtn name="Search" drop>{TorchIcon}</ToolBtn>
            <Handle />
            <ToolBtn name="Next Annotation" drop dim>{AnnIcon(false)}</ToolBtn>
            <ToolBtn name="Previous Annotation" drop dim>{AnnIcon(true)}</ToolBtn>
            <ToolBtn name="Last Edit Location">{EditIcon}</ToolBtn>
            <ToolBtn name="Back" drop>{ArrowShape(LEFT)}</ToolBtn>
            <ToolBtn name="Forward" drop dim>{ArrowShape(RIGHT, true)}</ToolBtn>
            <Handle />
            <ToolBtn name="Undo">{Undo}</ToolBtn>
            <ToolBtn name="Redo">{Redo}</ToolBtn>
            <Sep />
            <ToolBtn name="Zoom In">{Zoom(true)}</ToolBtn>
            <ToolBtn name="Zoom Out">{Zoom(false)}</ToolBtn>
            <Sep />
            <ToolBtn name="Show Outside">{OutIcon}</ToolBtn>
          </Tools>
          <Perspectives>
            <svg width={238} height={41} viewBox="0 0 238 41" aria-hidden="true">
              <defs><linearGradient id="edge" x1="0" x2="1" y1="0" y2="0"><stop offset="0" stopColor={FACE} /><stop offset=".6" stopColor="#fff" /></linearGradient></defs>
              <path d="M0 38.500L196 38.600C204 38 208 32 214 22C220 8 224 3 238 2.500" fill="none" stroke="url(#edge)" strokeWidth="1.500" />
            </svg>
            <PerspectiveTail>
              <Tool aria-label="Open Perspective">
                <Pix smooth><rect x="1.500" y="3.500" width="11" height="11" fill="#fff" stroke="#8a8468" /><path d="M1 4.500h9" stroke="#3c78b8" strokeWidth="2" /><path d="M5.500 6v8M5.500 10.500H12" stroke="#8a8468" /><path d="M12 1v8M8 5h8" stroke="#c09018" strokeWidth="2.500" /><path d="M12 2v6M9 5h6" stroke="#fff2a8" /></Pix>
              </Tool>
              <Selected>
                <Pix smooth><path d="M1 7l3-3h6v8l-3 3H1z" fill="#f060d0" stroke="#600850" /><path d="M1 7h6v8M7 7l3-3" stroke="#600850" /><path d="M11 1h5v10h-5z" fill="#f8b020" stroke="#806000" strokeWidth=".6" /><circle cx="11.500" cy="11.500" r="3.800" fill="#101890" /></Pix>
                Tersus Mo...
              </Selected>
            </PerspectiveTail>
          </Perspectives>
        </Toolbar>

        <Workbench>
          <Pane>
            <TabStrip>
              <Tab $tone="dim">
                <Pix><path d="M.5 2.500h7v2h8v11h-15z" fill="#f0e860" stroke="#8c8420" /><path d="M3 6.500h3v3H3zM4.500 9v4.500H8M4.500 11H8M9 6h4v3H9zM9 11h4v3H9z" stroke="#3c6c3c" /></Pix>
                <TabName>Repository Explorer</TabName>
                <CloseX />
              </Tab>
              <CurveBox><Curve top="#f0f0f0" bottom="#e4e4e4" /></CurveBox>
              <ViewTools>
                <button aria-label="Collapse All"><Pix><rect x="1.500" y="1.500" width="10" height="10" fill="#dcebf8" stroke="#88a8cc" /><rect x="3.500" y="3.500" width="10" height="11" fill="#fff" stroke="#88a8cc" /><path d="M6 9h6" stroke="#204878" strokeWidth="2" /></Pix></button>
                <button aria-label="Refresh"><Pix w={18} smooth><path d="M3 8.500C3 4.500 6 2.500 10 3V.5l4.500 4.200L10 9V6.500C8 6 6 6.500 5.500 8.500z" fill="#fbd878" stroke="#a87418" strokeWidth=".8" /><path d="M14.500 8c0 4-3 6-6.500 5.500v2L3.500 11.500 8 7.500v2.500c2 .5 3.500 0 4-2z" fill="#fbd878" stroke="#a87418" strokeWidth=".8" /></Pix></button>
                <button aria-label="View Menu"><Pix w={18} h={8}><path d="M4.500 .5h9L9 5z" fill="#fff" stroke="#000" /></Pix></button>
                <MinMax />
              </ViewTools>
            </TabStrip>
            <TreeFrame>
              <Tree>
                {projects.map((name) => (
                  <TreeRow key={name}>
                    <Twist aria-label={`Expand ${name}`}><Pix w={8} h={10} smooth><path d="M1 1l6 4-6 4z" fill="#b8b8b8" stroke="#6c6c6c" /></Pix></Twist>
                    <BlueFolder />
                    <TreeLabel>{name}</TreeLabel>
                  </TreeRow>
                ))}
              </Tree>
            </TreeFrame>
          </Pane>

          <Stack>
            <Pane>
              <TabStrip>
                <Tab $tone="white">
                  <Pix><rect x="2" y="1" width="8" height="5" fill="#c85040" stroke="#982818" /><path d="M10 5.500L14 14H6z" fill="#9880fc" stroke="#5838d8" /></Pix>
                  <TabName>Phonebook</TabName>
                  <CloseX />
                </Tab>
                <CurveBox><Curve top="#ffffff" bottom="#ffffff" /></CurveBox>
                <ViewTools><MinMax /></ViewTools>
              </TabStrip>
              <EditorBody>
                <Scroller>
                  <Canvas>
                    <Node $x={13} $y={13} $w={464} $h={284} $fill="#ffffdc">
                      <NodeTitle>
                        <Pix><rect x=".5" y="2.500" width="15" height="12" fill="#fff" stroke="#000" /><rect x="2.500" y="5.500" width="4" height="3" fill="#18a8f0" stroke="#000" /><rect x="9.500" y="9.500" width="4" height="3" fill="#18a8f0" stroke="#000" /><path d="M12 4.500h3M13.500 3v3" stroke="#000" /></Pix>
                        [Phonebook] &lt;&lt;System&gt;&gt;
                      </NodeTitle>
                      <Expander aria-label="Collapse"><Sign /></Expander>
                      <DisplayNode $x={12} $y={41} $w={216} $h={158} $pad={11} $fill="#d5d5ff">
                        <CardFile />Contacts
                        <Expander aria-label="Expand Contacts"><Sign plus /></Expander>
                      </DisplayNode>
                      <DisplayNode $x={242} $y={42} $w={210} $h={153} $pad={8} $fill="#d5d5ff">
                        <CardFile />Categories
                        <Expander aria-label="Expand Categories"><Sign plus /></Expander>
                      </DisplayNode>
                    </Node>
                  </Canvas>
                  <VBar>
                    <ScrollButton $v aria-label="Scroll up"><Pix w={8} h={8} smooth><path d="M4 0l4 8H0z" fill="#8c8c8c" /></Pix></ScrollButton>
                    <Thumb $v />
                    <ScrollButton $v aria-label="Scroll down"><Pix w={8} h={8} smooth><path d="M0 0h8L4 8z" fill="#8c8c8c" /></Pix></ScrollButton>
                  </VBar>
                  <HBar>
                    <ScrollButton aria-label="Scroll left"><Pix w={8} h={8} smooth><path d="M8 0v8L0 4z" fill="#8c8c8c" /></Pix></ScrollButton>
                    <Thumb />
                    <ScrollButton aria-label="Scroll right"><Pix w={8} h={8} smooth><path d="M0 0v8l8-4z" fill="#8c8c8c" /></Pix></ScrollButton>
                  </HBar>
                  <Corner />
                </Scroller>
                <Palette>
                  <PaletteHead>
                    <Pix smooth><circle cx="8" cy="8" r="7.300" fill="#e4eefa" stroke="#a8c0e0" />{[[5, 4, "#f09020"], [10.5, 4, "#88b020"], [3.5, 8, "#f09020"], [12.5, 8, "#40a040"], [5.5, 12, "#d03030"], [10.5, 12, "#2860d0"]].map(([x, y, c]) => <circle key={`${x}${y}`} cx={x} cy={y} r="1.700" fill={c as string} />)}<circle cx="8" cy="8" r="2" fill="#fff" /></Pix>
                    Palette
                    <Push aria-label="Pin palette"><Pix w={6} h={11} smooth><path d="M.5 1v9l5-4.500z" fill="#fff" stroke="#000" /></Pix></Push>
                  </PaletteHead>
                  <PaletteTools><Pix smooth>{TorchIcon}</Pix></PaletteTools>
                  <Entries $row={26} $cols={5}>{renderEntries(basicIcons)}{renderEntries(slotIcons)}</Entries>
                  {closedTop.map((n) => <Drawer key={n}><GoldFolder />{n}</Drawer>)}
                  <Drawer $open><GoldFolder />Display</Drawer>
                  <DisplayEntries $row={23} $cols={11}>{renderEntries(displayIcons)}</DisplayEntries>
                  {closedBottom.map((n) => <Drawer key={n}><GoldFolder />{n}</Drawer>)}
                </Palette>
              </EditorBody>
            </Pane>

            <Pane>
              <TabStrip>
                <Tab $tone="fade">
                  <Pix smooth><path d="M0 5l3 3.500L9 .5" stroke="#10b838" strokeWidth="2" /><path d="M8 8.500l7 7M15 8.500l-7 7" stroke="#f01010" strokeWidth="2.400" /></Pix>
                  <TabName>Validation</TabName>
                  <CloseX />
                </Tab>
                <CurveBox><Curve top="#fffffe" bottom="#e4e4e4" /></CurveBox>
                <IdleTab>
                  <Pix w={14} h={12}><rect x=".5" y=".5" width="13" height="11" fill="#fff" stroke="#5870a0" /><path d="M1 2h12" stroke="#7890c0" strokeWidth="2" /><path d="M5.500 3v8M1 5.500h12M1 8.500h12" stroke="#a8b8d0" /></Pix>
                  Properties
                </IdleTab>
                <ViewTools><MinMax /></ViewTools>
              </TabStrip>
              <ViewBar>
                <button>Validate</button>
                <button>Open containing context</button>
                <button>Show Path</button>
              </ViewBar>
              <TableArea>
                <Problems>
                  <colgroup><Col $w={117} /><Col $w={117} /><Col $w={353} /><Col /></colgroup>
                  <thead><tr><th>Root Model</th><th>Problem</th><th>Details</th><th>Location</th></tr></thead>
                </Problems>
              </TableArea>
            </Pane>
          </Stack>
        </Workbench>

        <Status>
          <Handle $h={28} />
          <Tool aria-label="Show View as Fast View"><Pix><rect x="3.500" y="3.500" width="5" height="11" fill="#f0faff" stroke="#999070" /><path d="M3 4.500h6" stroke="#3878b0" strokeWidth="2" /><path d="M13 1v8M9 5h8M11 3h4v4h-4z" stroke="#b88c20" /></Pix></Tool>
          <StatusRight>
            <Handle $h={28} />
            <Heap>
              <HeapText>26M of 99M</HeapText>
              <HeapTrash aria-label="Run Garbage Collector"><Pix w={12} h={16} smooth><path d="M1.500 4.500h9l-.5 10.500H2z" fill="#a8d4c8" stroke="#1870a0" /><path d="M4.500 5v10M7.500 5v10" stroke="#1870a0" /><path d="M0 3.500h12M4 1.500h4" stroke="#2888b8" strokeWidth="2" /></Pix></HeapTrash>
            </Heap>
            <Handle $h={28} />
          </StatusRight>
        </Status>
        <Frame />
      </Window>

      <BottomPanel>
        <button aria-label="Show Desktop"><Pix w={22} h={18}><rect width="22" height="18" fill="#b860b0" /><rect width="22" height="3" fill="#e8e4da" /><path d="M0 3h5v15H0z" fill="#8c3c88" /><path d="M1 6h3v3H1zM1 11h3v3H1z" fill="#f4e8f4" /><path d="M21.500 3v15M0 17.500h22" stroke="#d890d0" /></Pix></button>
        <DotSlot><Dots /></DotSlot>
        <TaskList>
          <Task><Firefox s={17} />How to Take a Screens...</Task>
          <Task><FilesIcon />[Downloads — File Bro...</Task>
          <Task $active><EclipseIcon />Tersus Modeling - Pho...</Task>
          <Task><FilesIcon />[Documents — File Bro...</Task>
        </TaskList>
        <Workspaces>
          <Workspace $on aria-label="Workspace 1"><EclipseIcon /></Workspace>
          <Workspace aria-label="Workspace 2" />
          <Workspace aria-label="Workspace 3" />
          <Workspace aria-label="Workspace 4" />
        </Workspaces>
        <TrashSlot><Pix w={20} h={22} smooth><path d="M2 3h16l-2 18H4z" fill="#a4a4a0" stroke="#6c6c68" /><ellipse cx="10" cy="3.500" rx="8.500" ry="2.500" fill="#70706c" stroke="#c8c8c4" /><path d="M5 9l4 3-3 4 5 3 4-5-4-3 3-3-4-1z" fill="#d8d8d4" /></Pix></TrashSlot>
      </BottomPanel>
    </Desktop>
  );
}
